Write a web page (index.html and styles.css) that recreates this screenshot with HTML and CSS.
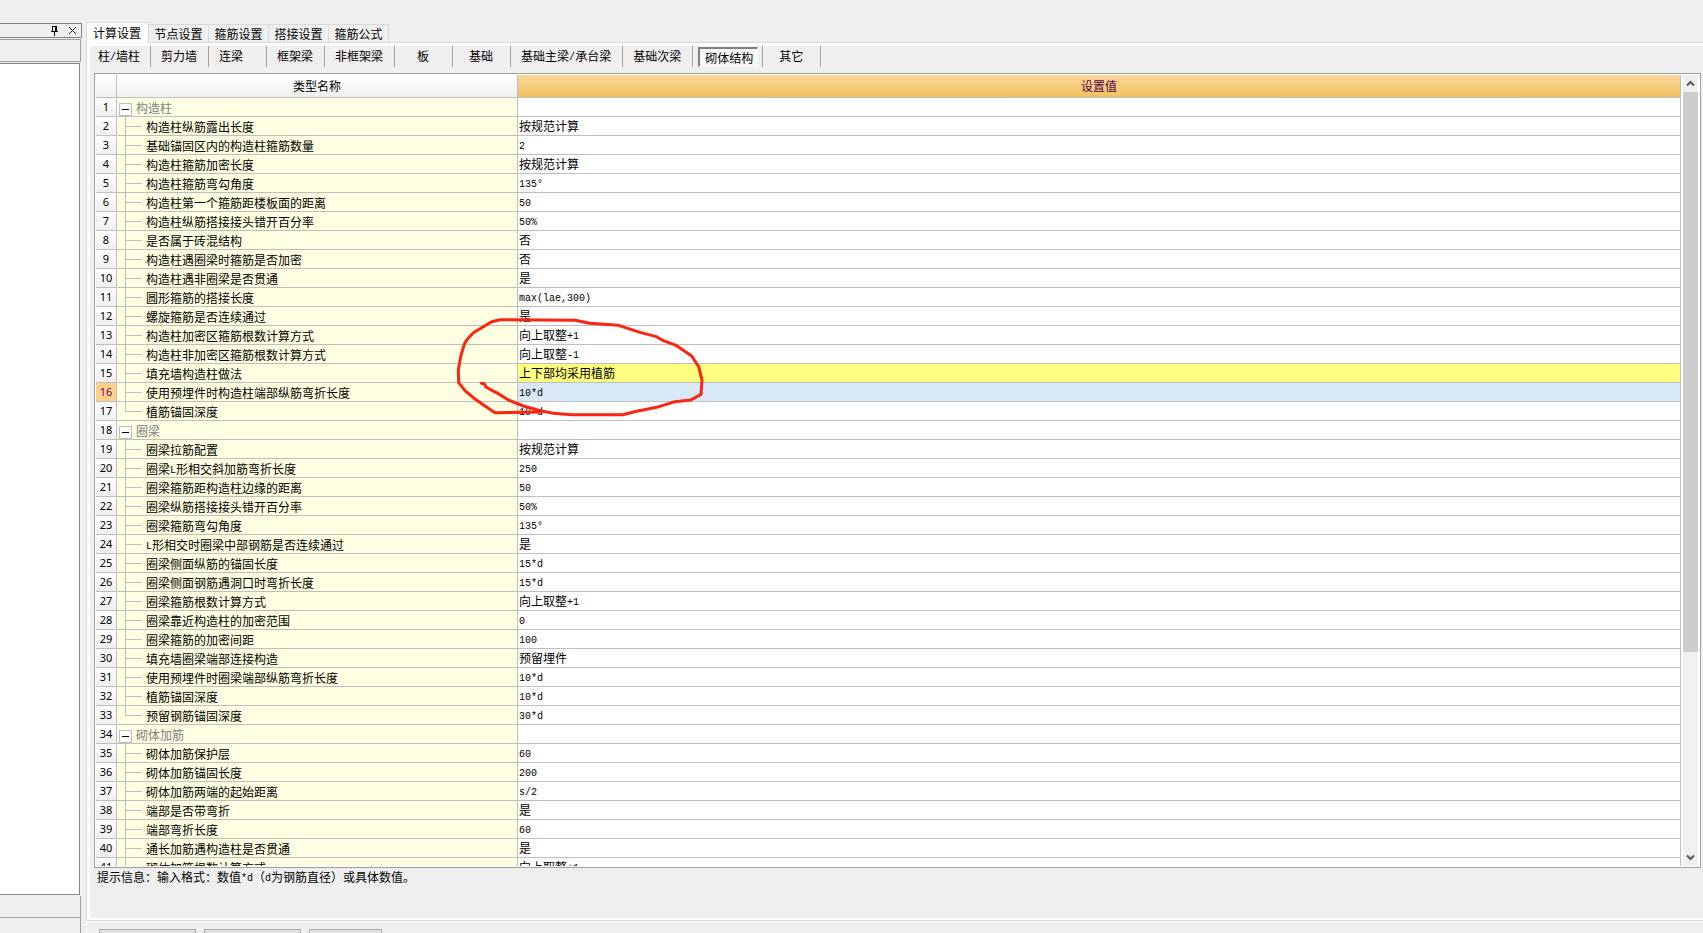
FILE: index.html
```html
<!DOCTYPE html>
<html lang="zh-CN">
<head>
<meta charset="utf-8">
<title>计算设置</title>
<link rel="stylesheet" href="styles.css">
</head>
<body>
<div class="app">
<aside class="dock">
<div class="dock-title">
<button class="tool" type="button" aria-label="固定"><svg width="9" height="10" viewBox="0 0 9 10" shape-rendering="crispEdges"><path d="M2 0h5v5h1v1H5v4H4V6H1V5h1zM3 1v4h2V1z" fill="#000" fill-rule="evenodd"/></svg></button>
<button class="tool" type="button" aria-label="关闭"><svg width="9" height="9" viewBox="0 0 9 9"><path d="M1 1l7 7M8 1L1 8" stroke="#222" fill="none"/></svg></button>
</div>
<div class="dock-bar"></div>
<div class="dock-view"></div>
<div class="dock-row"></div>
<div class="dock-foot"></div>
</aside>
<main class="main">
<nav class="tabs">
<button type="button" class="tab active">计算设置</button>
<button type="button" class="tab">节点设置</button>
<button type="button" class="tab">箍筋设置</button>
<button type="button" class="tab">搭接设置</button>
<button type="button" class="tab">箍筋公式</button>
</nav>
<section class="pane">
<div class="pane-body">
<div class="types">
<button type="button" class="type first">柱<span class="n">/</span>墙柱</button>
<button type="button" class="type">剪力墙</button>
<button type="button" class="type left">连梁</button>
<button type="button" class="type">框架梁</button>
<button type="button" class="type">非框架梁</button>
<button type="button" class="type">板</button>
<button type="button" class="type">基础</button>
<button type="button" class="type">基础主梁<span class="n">/</span>承台梁</button>
<button type="button" class="type">基础次梁</button>
<button type="button" class="type on"><span class="pressed">砌体结构</span></button>
<button type="button" class="type">其它</button>
</div>
<div class="frame">
<div class="grid-view">
<table class="grid">
<colgroup><col class="c-num"><col class="c-name"><col></colgroup>
<thead><tr><th></th><th>类型名称</th><th class="sel">设置值</th></tr></thead>
<tbody>
<tr class="group"><th>1</th><td><button type="button" class="fold" aria-label="折叠"></button>构造柱</td><td></td></tr>
<tr><th>2</th><td>构造柱纵筋露出长度</td><td>按规范计算</td></tr>
<tr><th>3</th><td>基础锚固区内的构造柱箍筋数量</td><td><span class="n">2</span></td></tr>
<tr><th>4</th><td>构造柱箍筋加密长度</td><td>按规范计算</td></tr>
<tr><th>5</th><td>构造柱箍筋弯勾角度</td><td><span class="n">135°</span></td></tr>
<tr><th>6</th><td>构造柱第一个箍筋距楼板面的距离</td><td><span class="n">50</span></td></tr>
<tr><th>7</th><td>构造柱纵筋搭接接头错开百分率</td><td><span class="n">50%</span></td></tr>
<tr><th>8</th><td>是否属于砖混结构</td><td>否</td></tr>
<tr><th>9</th><td>构造柱遇圈梁时箍筋是否加密</td><td>否</td></tr>
<tr><th>10</th><td>构造柱遇非圈梁是否贯通</td><td>是</td></tr>
<tr><th>11</th><td>圆形箍筋的搭接长度</td><td><span class="n">max(lae,300)</span></td></tr>
<tr><th>12</th><td>螺旋箍筋是否连续通过</td><td>是</td></tr>
<tr><th>13</th><td>构造柱加密区箍筋根数计算方式</td><td>向上取整<span class="n">+1</span></td></tr>
<tr><th>14</th><td>构造柱非加密区箍筋根数计算方式</td><td>向上取整<span class="n">-1</span></td></tr>
<tr class="marked"><th>15</th><td>填充墙构造柱做法</td><td>上下部均采用植筋</td></tr>
<tr class="current"><th>16</th><td>使用预埋件时构造柱端部纵筋弯折长度</td><td><span class="n">10*d</span></td></tr>
<tr class="last"><th>17</th><td>植筋锚固深度</td><td><span class="n">10*d</span></td></tr>
<tr class="group"><th>18</th><td><button type="button" class="fold" aria-label="折叠"></button>圈梁</td><td></td></tr>
<tr><th>19</th><td>圈梁拉筋配置</td><td>按规范计算</td></tr>
<tr><th>20</th><td>圈梁<span class="n">L</span>形相交斜加筋弯折长度</td><td><span class="n">250</span></td></tr>
<tr><th>21</th><td>圈梁箍筋距构造柱边缘的距离</td><td><span class="n">50</span></td></tr>
<tr><th>22</th><td>圈梁纵筋搭接接头错开百分率</td><td><span class="n">50%</span></td></tr>
<tr><th>23</th><td>圈梁箍筋弯勾角度</td><td><span class="n">135°</span></td></tr>
<tr><th>24</th><td><span class="n">L</span>形相交时圈梁中部钢筋是否连续通过</td><td>是</td></tr>
<tr><th>25</th><td>圈梁侧面纵筋的锚固长度</td><td><span class="n">15*d</span></td></tr>
<tr><th>26</th><td>圈梁侧面钢筋遇洞口时弯折长度</td><td><span class="n">15*d</span></td></tr>
<tr><th>27</th><td>圈梁箍筋根数计算方式</td><td>向上取整<span class="n">+1</span></td></tr>
<tr><th>28</th><td>圈梁靠近构造柱的加密范围</td><td><span class="n">0</span></td></tr>
<tr><th>29</th><td>圈梁箍筋的加密间距</td><td><span class="n">100</span></td></tr>
<tr><th>30</th><td>填充墙圈梁端部连接构造</td><td>预留埋件</td></tr>
<tr><th>31</th><td>使用预埋件时圈梁端部纵筋弯折长度</td><td><span class="n">10*d</span></td></tr>
<tr><th>32</th><td>植筋锚固深度</td><td><span class="n">10*d</span></td></tr>
<tr class="last"><th>33</th><td>预留钢筋锚固深度</td><td><span class="n">30*d</span></td></tr>
<tr class="group"><th>34</th><td><button type="button" class="fold" aria-label="折叠"></button>砌体加筋</td><td></td></tr>
<tr><th>35</th><td>砌体加筋保护层</td><td><span class="n">60</span></td></tr>
<tr><th>36</th><td>砌体加筋锚固长度</td><td><span class="n">200</span></td></tr>
<tr><th>37</th><td>砌体加筋两端的起始距离</td><td><span class="n">s/2</span></td></tr>
<tr><th>38</th><td>端部是否带弯折</td><td>是</td></tr>
<tr><th>39</th><td>端部弯折长度</td><td><span class="n">60</span></td></tr>
<tr><th>40</th><td>通长加筋遇构造柱是否贯通</td><td>是</td></tr>
<tr><th>41</th><td>砌体加筋根数计算方式</td><td>向上取整<span class="n">+1</span></td></tr>
</tbody>
</table>
<svg class="scribble" viewBox="0 0 840 390"><path d="M124 250L134 252L137 260L150 268L175 281L205 300L250 318L300 332L340 340L395 344L548 344L590 334L650 322L705 305L752 300L783 283L786 240L776 200L755 168L708 136L670 122L650 110L600 97L535 76L450 70L405 61L180 59L155 65L130 80L100 98L80 120L72 135L62 170L55 210L56 248L75 272L100 293L135 318L165 338L300 336"/></svg>
</div>
<div class="scroll">
<button type="button" class="arrow" aria-label="向上"><svg width="9" height="7" viewBox="0 0 9 7"><path d="M1 5.500L4.500 2L8 5.500" fill="none" stroke="#555" stroke-width="2"/></svg></button>
<div class="track"><div class="thumb"></div></div>
<button type="button" class="arrow" aria-label="向下"><svg width="9" height="7" viewBox="0 0 9 7"><path d="M1 1.500L4.500 5L8 1.500" fill="none" stroke="#555" stroke-width="2"/></svg></button>
</div>
</div>
<p class="hint">提示信息：输入格式：数值<span class="n">*d</span>（<span class="n">d</span>为钢筋直径）或具体数值。</p>
</div>
</section>
<footer class="actions">
<button type="button" class="action" aria-label="操作一"></button>
<button type="button" class="action" aria-label="操作二"></button>
<button type="button" class="action small" aria-label="操作三"></button>
</footer>
</main>
</div>
</body>
</html>
```
FILE: styles.css
```css
* { box-sizing: border-box; }
body {
  margin: 0;
  background: #efefef;
  color: #000;
  font: 12px/18px "Noto Sans CJK SC", sans-serif;
}
button {
  margin: 0;
  padding: 0;
  border: 0;
  background: none;
  color: inherit;
  font: inherit;
}
.n {
  font-family: "Liberation Mono", monospace;
  font-size: 10px;
  line-height: 1;
  vertical-align: 1px;
}
.app {
  display: flex;
  gap: 5px;
  height: 100vh;
  overflow: hidden;
}

/* docked panel on the left */
.dock {
  display: flex;
  flex-direction: column;
  width: 81px;
  flex: none;
  padding-top: 23px;
}
.dock-title {
  display: flex;
  justify-content: flex-end;
  align-items: center;
  gap: 9px;
  height: 15px;
  margin-right: -1px;
  padding-right: 4px;
  border: 1px solid #828282;
  border-left: 0;
}
.tool { display: flex; }
.dock-bar {
  height: 23px;
  margin-top: 1px;
  border: 1px solid #a0a0a0;
  border-left: 0;
}
.dock-view {
  flex: 1;
  margin: 1px 1px 1px 0;
  background: #fff;
  border: 1px solid #828790;
  border-width: 1px 1px 1px 0;
}
.dock-row {
  height: 22px;
  border: 1px solid #a0a0a0;
  border-width: 0 1px 1px 0;
}
.dock-foot { height: 15px; border-right: 1px solid #a0a0a0; }

/* tabs */
.main {
  display: flex;
  flex-direction: column;
  flex: 1;
  min-width: 0;
  padding-top: 22px;
}
.tabs { display: flex; align-items: flex-end; }
.tab {
  width: 60px;
  height: 18px;
  border: 1px solid #d9d9d9;
  border-width: 1px 1px 0 0;
}
.tab.active {
  width: 63px;
  height: 21px;
  margin-bottom: -1px;
  padding-right: 1px;
  background: #fff;
  border-left-width: 1px;
  z-index: 1;
}
.pane {
  display: flex;
  flex: 1;
  min-height: 0;
  border: 1px solid #d9d9d9;
  border-right: 0;
  background: #fff;
  padding: 3px 0 2px 3px;
}
.pane-body {
  display: flex;
  flex-direction: column;
  flex: 1;
  min-width: 0;
  background: #efefef;
}

/* component type bar */
.types { display: flex; height: 27px; align-items: flex-start; }
.type {
  min-width: 58px;
  height: 21px;
  padding: 0 11px 2px 10px;
  border-right: 1px solid #a0a0a0;
  line-height: 18px;
  white-space: nowrap;
}
.type.first { min-width: 61px; padding: 0 10px 2px 8px; }
.type.left { text-align: left; }
.type.on { padding: 0 4px 0 5px; }
.pressed {
  display: block;
  height: 20px;
  padding: 0 4px 0 5px;
  border: 1px solid #fff;
  border-top: 2px solid #808080;
  border-left: 2px solid #808080;
  background: #f8f8f8;
  line-height: 17px;
}

/* settings grid */
.frame {
  display: flex;
  flex: 1;
  min-height: 0;
  margin: 0 2px 0 4px;
  padding: 1px;
  border: 1px solid #a0a0a0;
  background: #fff;
}
.grid-view {
  position: relative;
  flex: 1;
  min-width: 0;
  overflow: hidden;
}
.grid {
  width: 100%;
  table-layout: fixed;
  border-collapse: separate;
  border-spacing: 0;
}
.c-num { width: 21px; }
.c-name { width: 401px; }
.grid th, .grid td {
  height: 19px;
  padding: 0;
  border: 1px solid #bfbfbf;
  border-width: 0 1px 1px 0;
  line-height: 18px;
  font-weight: 400;
  text-align: left;
  white-space: nowrap;
}
.grid thead th {
  height: 23px;
  text-align: center;
  background: linear-gradient(#fff, #f0f0f0);
}
.grid thead .sel { background: linear-gradient(#f9d89c, #f1c15f); color: #500050; }
.grid tbody th {
  background: linear-gradient(#fff, #efefef);
  font: 11px/18px "Noto Sans", sans-serif;
  text-align: center;
}
.grid td:nth-child(2) {
  padding: 1px 0 0 29px;
  line-height: 17px;
  background:
    linear-gradient(#bfbfbf, #bfbfbf) 8px 0 / 1px 100% no-repeat,
    linear-gradient(#bfbfbf, #bfbfbf) 8px 9px / 17px 1px no-repeat,
    #ffffe1;
}
.grid .last td:nth-child(2) {
  background:
    linear-gradient(#bfbfbf, #bfbfbf) 8px 0 / 1px 9px no-repeat,
    linear-gradient(#bfbfbf, #bfbfbf) 8px 9px / 17px 1px no-repeat,
    #ffffe1;
}
.grid .group td:nth-child(2) {
  padding: 0 0 0 2px;
  color: #808080;
  background: linear-gradient(#bfbfbf, #bfbfbf) 8px 14px / 1px 4px no-repeat, #ffffe1;
}
.grid td:nth-child(3) { padding-left: 1px; }
.fold {
  width: 13px;
  height: 13px;
  margin-right: 4px;
  border: 1px solid #bfbfbf;
  background: linear-gradient(#000, #000) center / 7px 1px no-repeat, #fff;
  vertical-align: -2px;
}
.grid .marked td:nth-child(3) { background: #ffff80; }
.grid .current td:nth-child(3) { background: #d9e9f7; }
.grid .current th { background: #ffd08a; color: #800080; }
.scribble {
  position: absolute;
  left: 344px;
  top: 225px;
  width: 280px;
  height: 130px;
  pointer-events: none;
}
.scribble path {
  fill: none;
  stroke: #ff2412;
  stroke-width: 9;
  stroke-linejoin: round;
  stroke-linecap: round;
}

/* scrollbar */
.scroll {
  display: flex;
  flex-direction: column;
  width: 15px;
  margin: 0 1px 0 2px;
  background: #f0f0f0;
}
.arrow {
  display: flex;
  justify-content: center;
  align-items: center;
  height: 17px;
}
.track { flex: 1; }
.thumb { height: 74%; background: #cdcdcd; }

.hint { height: 50px; margin: 0; padding-left: 7px; line-height: 18px; }
.actions {
  display: flex;
  align-items: flex-end;
  gap: 8px;
  height: 12px;
  padding-left: 12px;
  border: 1px solid #fff;
  border-width: 1px 0 0 1px;
}
.action {
  width: 97px;
  height: 4px;
  background: #e1e1e1;
  border: 1px solid #adadad;
  border-bottom: 0;
}
.action.small { width: 73px; }
```
